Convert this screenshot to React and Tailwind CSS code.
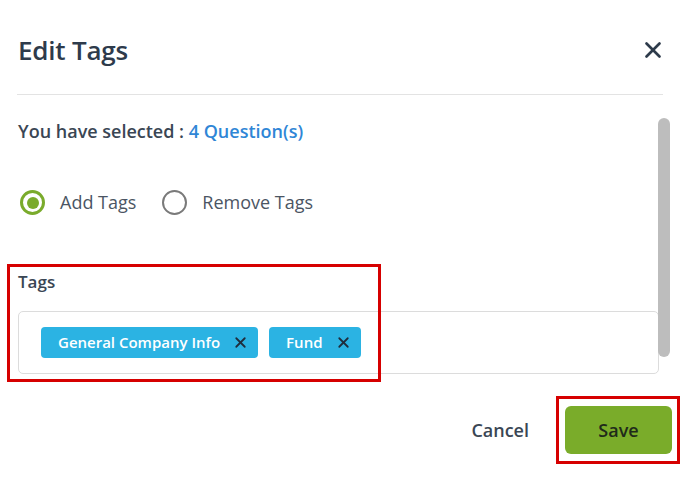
import { X } from 'lucide-react'

const FONT = { fontFamily: '"Open Sans", "Lato", sans-serif' }

function Radio({ checked, label }) {
  return (
    <label className="flex items-center gap-[15px]">
      {checked ? (
        <span className="w-[25px] h-[25px] rounded-full border-[3px] border-[#7aab2c] flex items-center justify-center">
          <span className="w-[12px] h-[12px] rounded-full bg-[#7aab2c]" />
        </span>
      ) : (
        <span className="w-[25px] h-[25px] rounded-full border-[2px] border-[#7a7a7a]" />
      )}
      <span className="text-[18px] text-[#4b5563]">{label}</span>
    </label>
  )
}

function Chip({ label }) {
  return (
    <span className="h-[31px] flex items-center gap-[12px] pl-[17px] pr-[9px] rounded-[4px] bg-[#2bb3e3] text-white text-[15px] font-semibold">
      {label}
      <X className="w-[17px] h-[17px] text-[#1f2d3d]" strokeWidth={2.5} />
    </span>
  )
}

export default function App() {
  return (
    <div className="relative w-[680px] h-[479px] bg-white overflow-hidden" style={FONT}>
      {/* Header */}
      <div className="flex items-center justify-between pl-[18px] pr-[14px] h-[94px] pt-[6px]">
        <h2 className="text-[26px] font-semibold text-[#2e3b4b] tracking-[-0.2px]">Edit Tags</h2>
        <X className="w-[26px] h-[26px] text-[#2e3b4b]" strokeWidth={2.5} />
      </div>
      <div className="mx-[17px] h-px bg-[#e3e3e3]" />

      {/* Body */}
      <div className="flex h-[280px]">
        <div className="flex-1 pl-[18px]">
          <p className="mt-[23px] text-[18px] font-semibold text-[#3a4654]">
            You have selected : <span className="text-[#2f86d6]">4 Question(s)</span>
          </p>
          <div className="mt-[44px] ml-[2px] flex items-center gap-[26px]">
            <Radio checked label="Add Tags" />
            <Radio label="Remove Tags" />
          </div>
          <p className="mt-[53px] text-[17px] font-semibold text-[#3a4654]">Tags</p>
          <div className="mt-[16px] h-[63px] border border-[#dcdcdc] rounded-[5px] pl-[22px] pt-[15px] flex items-start gap-[11px]">
            <Chip label="General Company Info" />
            <Chip label="Fund" />
          </div>
        </div>
        <div className="w-[21px] pt-[23px] pr-[9px]">
          <div className="w-[12px] h-[239px] rounded-full bg-[#bdbdbd] -ml-px" />
        </div>
      </div>

      {/* Footer */}
      <div className="flex items-center justify-end gap-[36px] pr-[8px] mt-[31px]">
        <button className="text-[18px] font-semibold text-[#3a4654]">Cancel</button>
        <button className="w-[107px] h-[48px] rounded-[6px] bg-[#7aac2a] text-[18px] font-semibold text-[#1f2a1a]">Save</button>
      </div>

      {/* Annotation boxes */}
      <div className="absolute left-[7px] top-[264px] w-[374px] h-[118px] border-[3px] border-[#d60000]" />
      <div className="absolute left-[556px] top-[396px] w-[124px] h-[68px] border-[3px] border-[#d60000]" />
    </div>
  )
}
